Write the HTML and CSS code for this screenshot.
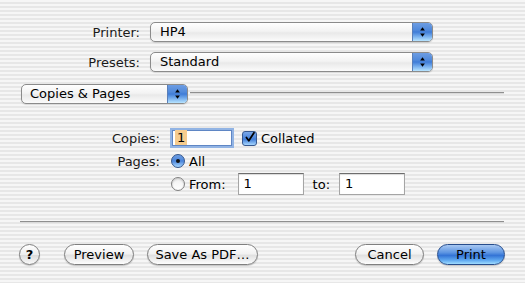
FILE: index.html
```html
<!DOCTYPE html>
<html lang="en">
<head>
  <meta charset="UTF-8">
  <title>Print</title>
  <link rel="stylesheet" href="styles.css">
</head>
<body>
  <div class="dialog">

    <!-- Printer / presets -->
    <div class="top-row">
      <span class="top-label">Printer:</span>
      <div class="popup wide">
        <span class="popup-text">HP4</span>
        <span class="popup-arrows">
          <svg width="20" height="20" viewBox="0 0 20 20"><path d="M7.5 8.5 L10 5 L12.5 8.5 Z M7.5 11.5 L10 15 L12.5 11.5 Z" fill="#000"/></svg>
        </span>
      </div>
    </div>
    <div class="top-row">
      <span class="top-label">Presets:</span>
      <div class="popup wide">
        <span class="popup-text">Standard</span>
        <span class="popup-arrows">
          <svg width="20" height="20" viewBox="0 0 20 20"><path d="M7.5 8.5 L10 5 L12.5 8.5 Z M7.5 11.5 L10 15 L12.5 11.5 Z" fill="#000"/></svg>
        </span>
      </div>
    </div>

    <!-- Pane chooser -->
    <div class="pane-row">
      <div class="popup pane">
        <span class="popup-text">Copies &amp; Pages</span>
        <span class="popup-arrows">
          <svg width="20" height="20" viewBox="0 0 20 20"><path d="M7.5 8.5 L10 5 L12.5 8.5 Z M7.5 11.5 L10 15 L12.5 11.5 Z" fill="#000"/></svg>
        </span>
      </div>
      <div class="rule"></div>
    </div>

    <!-- Copies & pages options -->
    <div class="options">
      <span class="opt-label">Copies:</span>
      <div class="opt-cell">
        <span class="field small focused"><span class="sel">1</span></span>
        <span class="checkbox">
          <svg width="15" height="15" viewBox="0 0 15 15"><path d="M3 7.5 L6 11.5 L12.5 1.5" fill="none" stroke="#000" stroke-width="2.2" stroke-linecap="round" stroke-linejoin="round"/></svg>
        </span>
        <span class="check-text">Collated</span>
      </div>

      <span class="opt-label">Pages:</span>
      <div class="opt-cell">
        <span class="radio on"><span class="dot"></span></span>
        <span class="radio-text">All</span>
      </div>

      <span></span>
      <div class="opt-cell">
        <span class="radio"></span>
        <span class="radio-text">From:</span>
        <span class="field from">1</span>
        <span class="to-text">to:</span>
        <span class="field">1</span>
      </div>
    </div>

    <div class="rule bottom-rule"></div>

    <!-- Buttons -->
    <div class="buttons">
      <span class="help">?</span>
      <span class="btn preview">Preview</span>
      <span class="btn pdf">Save As PDF…</span>
      <span class="spacer"></span>
      <span class="btn cancel">Cancel</span>
      <span class="btn default">Print</span>
    </div>
  </div>
</body>
</html>
```

FILE: styles.css
```css
html, body {
  margin: 0;
  padding: 0;
}

body {
  width: 525px;
  height: 283px;
  overflow: hidden;
  font-family: "DejaVu Sans", "Liberation Sans", sans-serif;
  font-size: 13px;
  color: #000;
  /* Aqua pinstripes */
  background: repeating-linear-gradient(to bottom, #f6f6f6 0, #f6f6f6 2px, #e7e7e7 2px, #e7e7e7 4px);
}

.dialog {
  padding-top: 22px;
}

/* Top popups */
.top-row {
  display: flex;
  align-items: center;
  height: 20px;
  margin-bottom: 10px;
}

.top-label {
  width: 140px;
  text-align: right;
  margin-right: 10px;
  color: #1a1a1a;
}

.popup {
  display: flex;
  align-items: stretch;
  height: 18px;
  border: 1px solid #8b8b8b;
  border-radius: 5px;
  overflow: hidden;
  background: linear-gradient(to bottom, #ffffff 0%, #f3f3f3 45%, #e9e9e9 55%, #fbfbfb 100%);
  box-shadow: 0 1px 1px rgba(0,0,0,0.12);
}

.popup.wide {
  width: 281px;
}

.popup-text {
  flex: 1;
  padding-left: 9px;
  line-height: 18px;
}

.popup-arrows {
  width: 19px;
  display: flex;
  align-items: center;
  justify-content: center;
  border-left: 1px solid #5a7fb8;
  background: linear-gradient(to bottom, #6d9de3 0%, #5089da 40%, #3f7cd7 50%, #7fb6f0 78%, #b8e4ff 100%);
}

.popup-arrows svg {
  display: block;
}

/* Pane chooser */
.pane-row {
  display: flex;
  align-items: center;
  margin-top: 12px;
  padding: 0 21px;
}

.popup.pane {
  width: 165px;
}

.popup.pane .popup-text {
  padding-left: 8px;
}

.rule {
  height: 0;
  border-top: 1px solid #8f8f8f;
  border-bottom: 1px solid #dadada;
}

.pane-row .rule {
  flex: 1;
  margin-left: 2px;
  margin-top: -3px;
}

/* Options grid */
.options {
  display: grid;
  grid-template-columns: 160px 1fr;
  grid-auto-rows: 20px;
  row-gap: 3px;
  column-gap: 10px;
  margin-top: 24px;
}

.opt-label {
  text-align: right;
  align-self: center;
  color: #1a1a1a;
}

.opt-cell {
  display: flex;
  align-items: center;
}

.field {
  display: inline-block;
  box-sizing: border-box;
  width: 66px;
  height: 22px;
  line-height: 20px;
  padding-left: 5px;
  background: #fff;
  border: 1px solid #a5a5a5;
  border-top-color: #6d6d6d;
  box-shadow: inset 0 1px 1px rgba(0,0,0,0.15);
}

.field.small {
  width: 60px;
  height: 16px;
  line-height: 14px;
  padding-left: 2px;
  margin-left: 2px;
}

.field.focused {
  border-color: #5f86c4;
  box-shadow: 0 0 0 2px #92b4e4;
}

.sel {
  background: #f6cc8e;
  padding: 0 2px;
}

.checkbox {
  box-sizing: border-box;
  width: 15px;
  height: 15px;
  margin-left: 10px;
  border: 1px solid #36588f;
  border-radius: 3px;
  background: linear-gradient(to bottom, #7ba8e8 0%, #4d87dc 45%, #3f7bd6 55%, #a6d6ff 100%);
  display: flex;
  align-items: center;
  justify-content: center;
}

.checkbox svg {
  display: block;
  margin-top: -2px;
  margin-left: 1px;
}

.check-text {
  margin-left: 4px;
}

.radio {
  box-sizing: border-box;
  width: 14px;
  height: 14px;
  margin-left: 1px;
  border-radius: 50%;
  border: 1px solid #808080;
  background: linear-gradient(to bottom, #f0f0f0, #ffffff);
  box-shadow: inset 0 1px 2px rgba(0,0,0,0.2);
  display: flex;
  align-items: center;
  justify-content: center;
}

.radio.on {
  border-color: #34568c;
  background: linear-gradient(to bottom, #6f9fe4 0%, #4a84da 50%, #a9d8ff 100%);
  box-shadow: none;
}

.dot {
  width: 4px;
  height: 4px;
  border-radius: 50%;
  background: #111;
}

.radio-text {
  margin-left: 4px;
}

.field.from {
  margin-left: 12px;
}

.to-text {
  margin: 0 9px 0 9px;
}

.bottom-rule {
  margin: 27px 21px 0 20px;
}

/* Buttons */
.buttons {
  display: flex;
  align-items: center;
  margin-top: 21px;
  padding: 0 20px 0 19px;
}

.help {
  box-sizing: border-box;
  width: 21px;
  height: 21px;
  border-radius: 50%;
  border: 1px solid #7e7e7e;
  background: linear-gradient(to bottom, #ffffff 0%, #ededed 50%, #dcdcdc 55%, #fafafa 100%);
  box-shadow: 0 1px 1px rgba(0,0,0,0.2);
  font-weight: bold;
  font-size: 13px;
  text-align: center;
  line-height: 19px;
  margin-right: 24px;
}

.btn {
  box-sizing: border-box;
  height: 21px;
  line-height: 19px;
  text-align: center;
  border: 1px solid #7f7f7f;
  border-radius: 11px;
  background: linear-gradient(to bottom, #ffffff 0%, #f2f2f2 45%, #e1e1e1 55%, #fdfdfd 100%);
  box-shadow: 0 1px 1px rgba(0,0,0,0.2);
}

.preview {
  width: 70px;
}

.pdf {
  width: 111px;
  margin-left: 13px;
}

.spacer {
  flex: 1;
}

.cancel {
  width: 69px;
}

.default {
  width: 68px;
  margin-left: 13px;
  border-color: #274d8c;
  background: linear-gradient(to bottom, #a8c8f2 0%, #5d95e2 40%, #3474d6 55%, #5fa8f0 80%, #9fdcff 100%);
}
```
